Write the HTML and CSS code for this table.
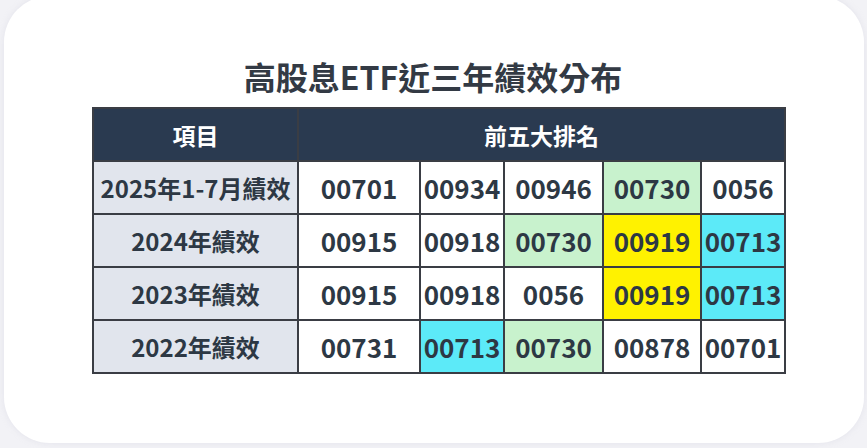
FILE: index.html
```html
<!DOCTYPE html>
<html lang="zh-Hant">
<head>
<meta charset="utf-8">
<link rel="stylesheet" href="styles.css">
</head>
<body>
<div class="card">
  <h1 class="title">高股息ETF近三年績效分布</h1>
  <table class="perf">
    <colgroup>
      <col class="c-label">
      <col class="c1"><col class="c2"><col class="c3"><col class="c4"><col class="c5">
    </colgroup>
    <thead>
      <tr><th>項目</th><th colspan="5">前五大排名</th></tr>
    </thead>
    <tbody>
      <tr><td class="label">2025年1-7月績效</td><td>00701</td><td>00934</td><td>00946</td><td class="green">00730</td><td>0056</td></tr>
      <tr><td class="label">2024年績效</td><td>00915</td><td>00918</td><td class="green">00730</td><td class="yellow">00919</td><td class="cyan">00713</td></tr>
      <tr><td class="label">2023年績效</td><td>00915</td><td>00918</td><td>0056</td><td class="yellow">00919</td><td class="cyan">00713</td></tr>
      <tr><td class="label">2022年績效</td><td>00731</td><td class="cyan">00713</td><td class="green">00730</td><td>00878</td><td>00701</td></tr>
    </tbody>
  </table>
</div>
</body>
</html>
```
FILE: styles.css
```css
html, body {
  margin: 0;
  padding: 0;
  background: #f2f2f6;
  overflow: hidden;
}
body {
  width: 867px;
  height: 448px;
  font-family: "Noto Sans CJK TC", "Noto Sans", sans-serif;
}
.card {
  box-sizing: border-box;
  margin: -4px 3px 0 4px;
  width: 860px;
  height: 447px;
  background: #ffffff;
  border-radius: 46px;
  box-shadow: 0 0 6px rgba(200, 200, 215, 0.35);
  padding: 59px 0 0 88px;
}
.title {
  margin: 0 0 10px 0;
  width: 682px;
  text-align: center;
  font-size: 32px;
  font-weight: 700;
  line-height: 42px;
  color: #333a44;
  letter-spacing: 0;
}
.perf {
  border-collapse: collapse;
  width: 692px;
  table-layout: fixed;
}
.c-label { width: 205px; }
.c1 { width: 122px; }
.c2 { width: 84px; }
.c3 { width: 99px; }
.c4 { width: 98px; }
.c5 { width: 84px; }
.perf th, .perf td {
  border: 2px solid #3a3d44;
  height: 51px;
  padding: 0;
  text-align: center;
  vertical-align: middle;
  font-weight: 700;
  white-space: nowrap;
}
.perf th {
  background: #2a3a50;
  color: #ffffff;
  font-size: 23px;
}
.perf td {
  color: #2d3844;
  font-size: 26px;
  background: #ffffff;
}
.perf td.label {
  background: #e1e5ed;
  font-size: 24px;
}
.perf td.green { background: #c8f2cd; }
.perf td.yellow { background: #fff200; }
.perf td.cyan { background: #5ceaf8; }
```
